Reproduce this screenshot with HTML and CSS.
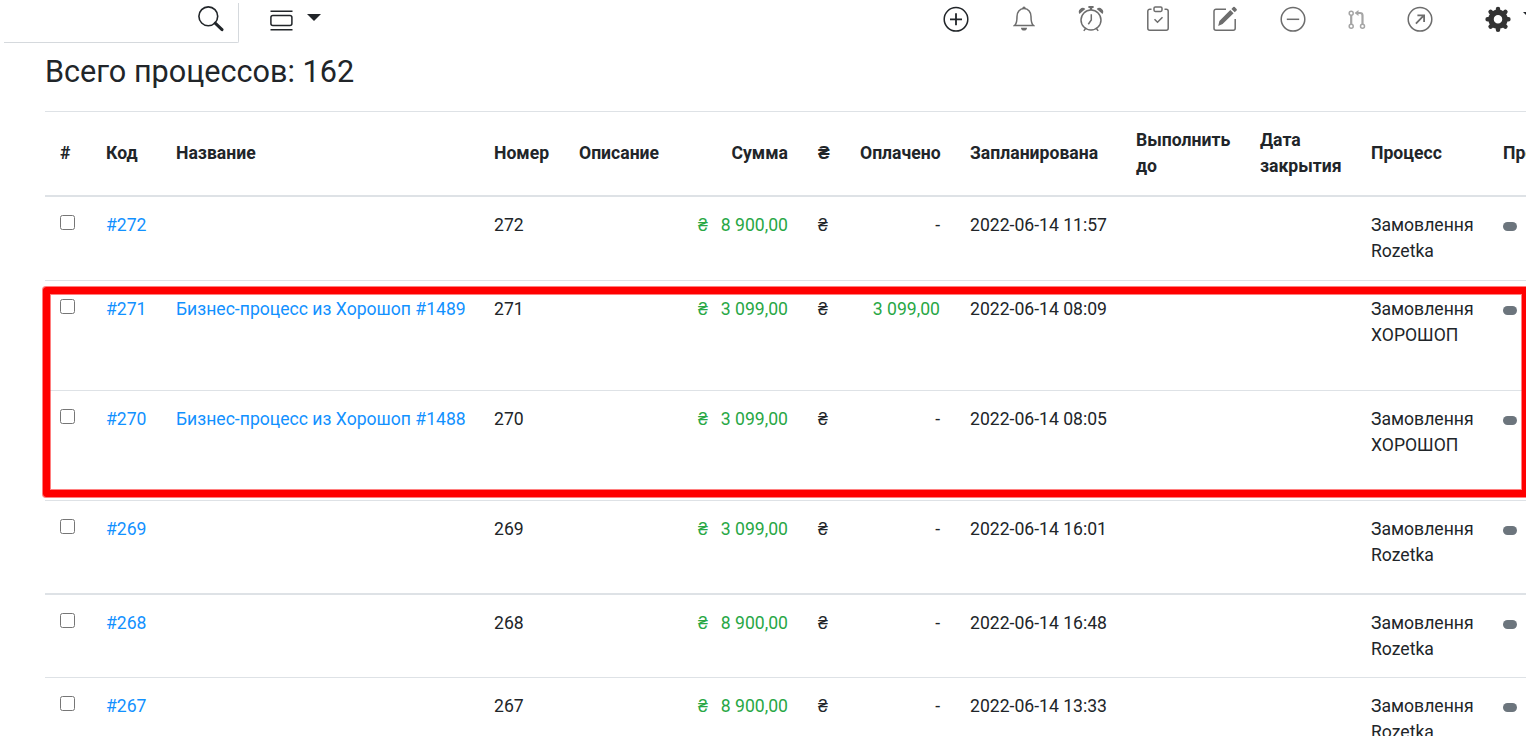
FILE: index.html
```
<!DOCTYPE html>
<html lang="ru">
<head>
    <meta charset="UTF-8">
    <meta name="viewport" content="width=device-width, initial-scale=1.0">
    <title>Процессы</title>
    <link rel="stylesheet" href="styles.css">
</head>
<body>
    <div class="page">
        <div class="toolbar">
            <div class="search">
                <svg class="icon-search" width="26" height="26" viewBox="0 0 26 26">
                    <circle cx="10.3" cy="10.3" r="9.4" fill="none" stroke="#212529" stroke-width="1.6"/>
                    <path d="M17.2 17.2L24 23.6" stroke="#212529" stroke-width="3" stroke-linecap="round"/>
                </svg>
            </div>
            <div class="view-menu">
                <svg width="24" height="22" viewBox="0 0 24 22" fill="none" stroke="#212529" stroke-width="1.5">
                    <path d="M.5 1.2h22M.5 19.7h22"/>
                    <rect x=".9" y="5.5" width="21" height="10" rx="2"/>
                </svg>
                <span class="caret"></span>
            </div>
            <div class="actions">
                <!-- add -->
                <svg class="dark" width="26" height="26" viewBox="0 0 26 26">
                    <circle cx="13" cy="13.3" r="11.8"/>
                    <path d="M13 7.3v12M7 13.3h12" stroke-width="1.8"/>
                </svg>
                <!-- bell -->
                <svg class="bell" width="22" height="26" viewBox="0 0 22 26">
                    <path d="M1.5 19.5h19c-2-1.6-2.5-5-2.5-9.1C18 6.2 15.5 2.6 11 2.6S4 6.2 4 10.4c0 4.100-.5 7.5-2.5 9.1z"/>
                    <path class="fill" d="M9.3 2.2a1.700 1.700 0 0 1 3.4 0l-.2.8h-3zM8 21.8h6a3 2.8 0 0 1-6 0z"/>
                </svg>
                <!-- alarm -->
                <svg width="26" height="26" viewBox="0 0 26 26">
                    <circle cx="13" cy="14" r="10"/>
                    <path d="M13.3 8.2v5.7l-3 4.3M7.5 22.6l-1.700 2.3M18.5 22.6l1.7 2.3"/>
                    <path class="fill" d="M10.4 0h5.2v2h-1.4v2h-2.4v-2h-1.400zM1.5 8a3.9 3.9 0 0 1 5.8-5.1zM24.5 8a3.9 3.9 0 0 0-5.8-5.100z"/>
                </svg>
                <!-- tasks -->
                <svg width="24" height="26" viewBox="0 0 24 26">
                    <path d="M5.500 3.200H3.800a2 2 0 0 0-2 2v17.100a2 2 0 0 0 2 2h16.400a2 2 0 0 0 2-2V5.200a2 2 0 0 0-2-2h-1.700"/>
                    <rect x="8" y="1" width="8" height="4.400" rx="1.300"/>
                    <path d="M8.500 13.200l3 3 5-5"/>
                </svg>
                <!-- edit -->
                <svg width="26" height="26" viewBox="0 0 26 26">
                    <path d="M14 3.200H4a2 2 0 0 0-2 2v17.100a2 2 0 0 0 2 2h17.200a2 2 0 0 0 2-2V13"/>
                    <path class="fill" d="M18.300 4l3.300 3.300L10.600 18.100 6.200 20l1.200-5zM19.400 3l1.900-1.900a1 1 0 0 1 1.400 0l1.900 1.900a1 1 0 0 1 0 1.400l-1.900 1.900z"/>
                </svg>
                <!-- minus -->
                <svg width="26" height="26" viewBox="0 0 26 26">
                    <circle cx="13" cy="13.3" r="11.8"/>
                    <path d="M6.800 13.3h12.400"/>
                </svg>
                <!-- pull request -->
                <svg class="pale" width="18" height="20" viewBox="0 0 18 20">
                    <path d="M3.200 5v9.500M14.500 14.500V5.500q0-2.500-2.500-2.500H9" stroke-width="2.2"/>
                    <circle cx="3.200" cy="3.200" r="2"/>
                    <circle cx="3.200" cy="16.300" r="2"/>
                    <circle cx="14.500" cy="16.300" r="2"/>
                    <path class="fill" d="M6.600 3L10.500 0v6z"/>
                </svg>
                <!-- arrow -->
                <svg class="arrow" width="26" height="26" viewBox="0 0 26 26">
                    <circle cx="13" cy="13.3" r="11.8"/>
                    <path d="M8.900 17.600l8-8.200M10.400 9.300h6.700v6.600" stroke-width="1.800"/>
                </svg>
                <!-- settings -->
                <svg class="gear" width="26" height="26" viewBox="0 0 26 26">
                    <circle cx="13" cy="13.3" r="7"/>
                    <path class="teeth" d="M13 4.800V2.900M13 21.800v1.900M4.500 13.3H2.600M21.500 13.3h1.900M7 7.3L5.600 5.900M19 7.300l1.400-1.400M7 19.300l-1.400 1.400M19 19.300l1.400 1.400"/>
                </svg>
                <span class="caret caret-end"></span>
            </div>
        </div>

        <h1>Всего процессов: 162</h1>

        <div class="table-wrap">
            <table>
                <colgroup>
                    <col class="c-check"><col class="c-code"><col class="c-name"><col class="c-num"><col class="c-desc">
                    <col class="c-sum"><col class="c-cur"><col class="c-paid"><col class="c-plan"><col class="c-due">
                    <col class="c-close"><col class="c-proc"><col class="c-prod">
                </colgroup>
                <thead>
                    <tr>
                        <th>#</th><th>Код</th><th>Название</th><th>Номер</th><th>Описание</th>
                        <th class="right">Сумма</th><th>₴</th><th class="right">Оплачено</th><th>Запланирована</th>
                        <th>Выполнить до</th><th>Дата закрытия</th><th>Процесс</th><th>Продукты</th>
                    </tr>
                </thead>
                <tbody>
                    <tr class="h84">
                        <td><input type="checkbox"></td><td><a href="#">#272</a></td><td></td><td>272</td><td></td>
                        <td class="right green"><span class="cur">₴</span>8 900,00</td><td>₴</td><td class="right">-</td><td class="nowrap">2022-06-14 11:57</td>
                        <td></td><td></td><td>Замовлення Rozetka</td><td><span class="badge"></span></td>
                    </tr>
                    <tr class="h110">
                        <td><input type="checkbox"></td><td><a href="#">#271</a></td><td class="nowrap"><a href="#">Бизнес-процесс из Хорошоп #1489</a></td><td>271</td><td></td>
                        <td class="right green"><span class="cur">₴</span>3 099,00</td><td>₴</td><td class="right green">3 099,00</td><td class="nowrap">2022-06-14 08:09</td>
                        <td></td><td></td><td>Замовлення ХОРОШОП</td><td><span class="badge"></span></td>
                    </tr>
                    <tr class="h110">
                        <td><input type="checkbox"></td><td><a href="#">#270</a></td><td class="nowrap"><a href="#">Бизнес-процесс из Хорошоп #1488</a></td><td>270</td><td></td>
                        <td class="right green"><span class="cur">₴</span>3 099,00</td><td>₴</td><td class="right">-</td><td class="nowrap">2022-06-14 08:05</td>
                        <td></td><td></td><td>Замовлення ХОРОШОП</td><td><span class="badge"></span></td>
                    </tr>
                    <tr class="h94">
                        <td><input type="checkbox"></td><td><a href="#">#269</a></td><td></td><td>269</td><td></td>
                        <td class="right green"><span class="cur">₴</span>3 099,00</td><td>₴</td><td class="right">-</td><td class="nowrap">2022-06-14 16:01</td>
                        <td></td><td></td><td>Замовлення Rozetka</td><td><span class="badge"></span></td>
                    </tr>
                    <tr class="h83">
                        <td><input type="checkbox"></td><td><a href="#">#268</a></td><td></td><td>268</td><td></td>
                        <td class="right green"><span class="cur">₴</span>8 900,00</td><td>₴</td><td class="right">-</td><td class="nowrap">2022-06-14 16:48</td>
                        <td></td><td></td><td>Замовлення Rozetka</td><td><span class="badge"></span></td>
                    </tr>
                    <tr class="h84">
                        <td><input type="checkbox"></td><td><a href="#">#267</a></td><td></td><td>267</td><td></td>
                        <td class="right green"><span class="cur">₴</span>8 900,00</td><td>₴</td><td class="right">-</td><td class="nowrap">2022-06-14 13:33</td>
                        <td></td><td></td><td>Замовлення Rozetka</td><td><span class="badge"></span></td>
                    </tr>
                </tbody>
            </table>
            <div class="highlight"></div>
        </div>
    </div>
</body>
</html>
```
FILE: styles.css
```
* {
    box-sizing: border-box;
}

body {
    margin: 0;
    background-color: #fff;
    color: #212529;
    font-family: Roboto, sans-serif;
    font-size: 17.6px;
    line-height: 26px;
    overflow: hidden;
}

.page {
    width: 1526px;
    height: 736px;
    overflow: hidden;
}

/* Top toolbar */
.toolbar {
    display: flex;
    height: 43px;
    padding-left: 4px;
}

.search {
    width: 235px;
    height: 40px;
    margin-top: 3px;
    padding: 3px 14px 0 0;
    border-right: 1px solid #d5d9dd;
    border-bottom: 1px solid #d5d9dd;
    border-bottom-right-radius: 2px;
}

.search svg {
    display: block;
    margin-left: auto;
}

.view-menu {
    display: flex;
    align-items: flex-start;
    margin-left: 31px;
    padding-top: 10px;
}

.caret {
    margin: 4px 0 0 13px;
    border-left: 7.5px solid transparent;
    border-right: 7.5px solid transparent;
    border-top: 7.5px solid #212529;
}

.actions {
    display: flex;
    align-items: flex-start;
    margin-left: auto;
    padding-top: 6px;
}

.actions svg {
    flex: none;
    fill: none;
    stroke: #6d6d6d;
    stroke-width: 1.5;
    margin-right: 42px;
}

.actions svg .fill {
    fill: #6d6d6d;
    stroke: none;
}

.actions svg.dark {
    margin-right: 44px;
    stroke: #212529;
}

.actions svg.bell {
    margin-right: 43px;
}

.actions svg.pale {
    margin-top: 4px;
    margin-right: 41px;
    stroke: #a5a5a5;
}

.actions svg.pale .fill {
    fill: #a5a5a5;
}

.actions svg.arrow {
    margin-right: 52px;
}

.actions svg.gear {
    margin-right: 0;
    stroke: #333;
    stroke-width: 5.5;
}

.gear .teeth {
    stroke-width: 4.5;
    stroke-linecap: round;
}

.caret-end {
    margin: 6px -11px 0 12px;
}

h1 {
    margin: 0;
    padding: 11px 0 0 45px;
    height: 68px;
    font-size: 30.6px;
    line-height: 36px;
    font-weight: 400;
}

/* Process list */
.table-wrap {
    position: relative;
    padding-left: 45px;
}

table {
    width: 1560px;
    table-layout: fixed;
    border-collapse: separate;
    border-spacing: 0;
    border-top: 1px solid #dee2e6;
}

.c-check { width: 46px; }
.c-code { width: 70px; }
.c-name { width: 318px; }
.c-num { width: 85px; }
.c-desc { width: 110px; }
.c-sum { width: 129px; }
.c-cur { width: 42px; }
.c-paid { width: 110px; }
.c-plan { width: 166px; }
.c-due { width: 124px; }
.c-close { width: 111px; }
.c-proc { width: 132px; }
.c-prod { width: 117px; }

th,
td {
    padding: 15px;
    text-align: left;
    vertical-align: top;
    border-bottom: 1px solid #dee2e6;
}

th {
    height: 85px;
    padding-bottom: 16px;
    vertical-align: middle;
    font-weight: 700;
    border-bottom-width: 2px;
}

.right {
    text-align: right;
}

.nowrap {
    white-space: nowrap;
}

.green {
    color: #28a745;
}

.cur {
    margin-right: 13px;
}

a {
    color: #1291ff;
    text-decoration: none;
}

.h83 { height: 83px; }
.h84 { height: 84px; }
.h94 { height: 94px; }
.h110 { height: 110px; }

.h94 td {
    border-bottom-width: 2px;
}

td input {
    display: block;
    width: 15px;
    height: 15px;
    margin: 3px 0 0;
}

.badge {
    display: block;
    width: 14px;
    height: 9px;
    margin-top: 10px;
    border-radius: 4.5px;
    background-color: #6c757d;
}

/* Red frame around the selected rows */
.highlight {
    position: absolute;
    left: 43px;
    top: 176px;
    width: 1486px;
    height: 210px;
    border: 7px solid #f00;
    border-radius: 3px;
    box-shadow: 0 0 0 1px rgba(255, 0, 0, 0.5), inset 0 0 0 1px rgba(255, 0, 0, 0.5);
}
```
